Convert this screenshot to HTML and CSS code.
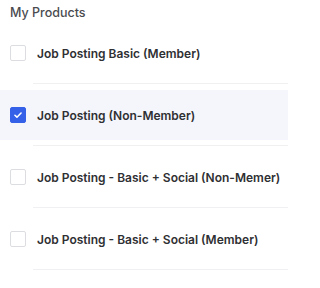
FILE: index.html
```html
<!DOCTYPE html>
<html>
<head>
<meta charset="utf-8">
<link rel="stylesheet" href="styles.css">
</head>
<body>
<div class="panel">
  <div class="title">My Products</div>
  <ul class="list">
    <li class="item">
      <label class="row">
        <span class="box"></span>
        <span class="name">Job Posting Basic (Member)</span>
      </label>
    </li>
    <li class="item">
      <label class="row selected">
        <span class="box checked">
          <svg viewBox="0 0 16 16" width="16" height="16"><path d="M4.5 8.3l2.3 2.2 4.7-4.8" fill="none" stroke="#fff" stroke-width="1.8" stroke-linecap="round" stroke-linejoin="round"/></svg>
        </span>
        <span class="name">Job Posting (Non-Member)</span>
      </label>
    </li>
    <li class="item">
      <label class="row">
        <span class="box"></span>
        <span class="name">Job Posting - Basic + Social (Non-Memer)</span>
      </label>
    </li>
    <li class="item">
      <label class="row">
        <span class="box"></span>
        <span class="name">Job Posting - Basic + Social (Member)</span>
      </label>
    </li>
  </ul>
</div>
</body>
</html>
```
FILE: styles.css
```css
html, body {
  margin: 0;
  padding: 0;
  background: #fff;
}
body {
  font-family: Inter, "Noto Sans", sans-serif;
  color: #2f3033;
}
.panel {
  width: 288px;
}
.title {
  padding: 4px 10px 0;
  height: 18px;
  font-size: 12.5px;
  font-weight: 500;
  color: #4a4b4f;
  line-height: 18px;
}
.list {
  list-style: none;
  margin: 0;
  padding: 0;
}
.item {
  padding: 6px 0 6px;
  position: relative;
}
.item::after {
  content: "";
  position: absolute;
  left: 33px;
  right: 0;
  bottom: 0;
  height: 1px;
  background: #f0f0f2;
}
.row {
  display: flex;
  align-items: center;
  gap: 11px;
  height: 50px;
  padding-left: 10px;
}
.row.selected {
  background: #f5f6fb;
}
.box {
  width: 14px;
  height: 14px;
  border: 1px solid #dcdde0;
  border-radius: 2px;
  background: #fff;
  flex: none;
  display: flex;
  align-items: center;
  justify-content: center;
}
.box.checked {
  background: #3461e8;
  border-color: #3461e8;
}
.box svg {
  width: 14px;
  height: 14px;
}
.name {
  font-size: 12px;
  font-weight: 600;
  color: #2f3033;
}
```
